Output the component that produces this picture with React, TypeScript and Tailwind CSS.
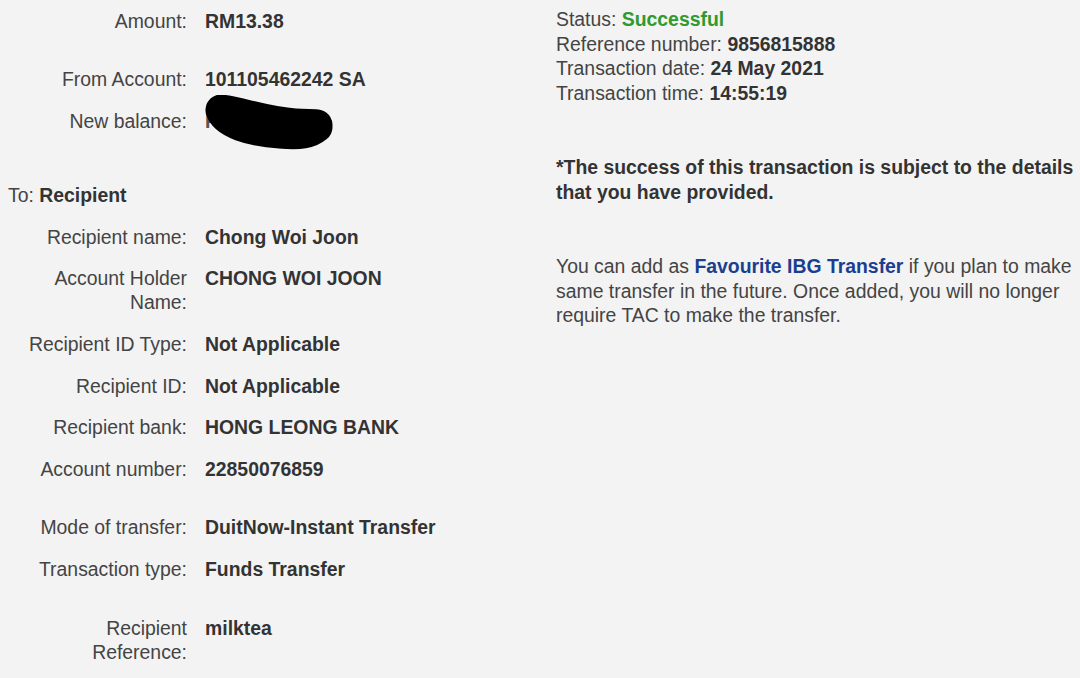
import React from "react";

interface Row {
  label: React.ReactNode;
  value: React.ReactNode;
  gapBefore?: number;
}

const rowsTop: Row[] = [
  { label: "Amount:", value: "RM13.38" },
  { label: "From Account:", value: "101105462242 SA", gapBefore: 17 },
  {
    label: "New balance:",
    value: (
      <span className="relative inline-block">
        <span className="text-[#555]">R</span>
        <Redaction />
      </span>
    ),
  },
];

const rowsRecipient: Row[] = [
  { label: "Recipient name:", value: "Chong Woi Joon" },
  {
    label: (
      <>
        Account Holder
        <br />
        Name:
      </>
    ),
    value: "CHONG WOI JOON",
  },
  { label: "Recipient ID Type:", value: "Not Applicable" },
  { label: "Recipient ID:", value: "Not Applicable" },
  { label: "Recipient bank:", value: "HONG LEONG BANK" },
  { label: "Account number:", value: "22850076859" },
  { label: "Mode of transfer:", value: "DuitNow-Instant Transfer", gapBefore: 17 },
  { label: "Transaction type:", value: "Funds Transfer" },
  {
    label: (
      <>
        Recipient
        <br />
        Reference:
      </>
    ),
    value: "milktea",
    gapBefore: 17,
  },
];

function Redaction() {
  // marker scribble hiding the balance
  return (
    <svg
      className="absolute left-0 top-[-14px]"
      width="140"
      height="60"
      viewBox="0 0 140 60"
    >
      <path
        d="M16 15 C 35 17, 60 27, 90 29 C 102 30, 108 29, 112 30 M16 15 C 20 28, 45 36, 75 38 C 95 40, 105 38, 112 32"
        fill="none"
        stroke="#000"
        strokeWidth="31"
        strokeLinecap="round"
        strokeLinejoin="round"
      />
    </svg>
  );
}

function DetailRow({ row }: { row: Row }) {
  return (
    <div
      className="flex pt-[8.5px] pb-[9.1px]"
      style={row.gapBefore ? { marginTop: row.gapBefore } : undefined}
    >
      <div className="w-[187px] shrink-0 text-right text-[#444]">{row.label}</div>
      <div className="ml-[18px] font-bold text-[#333]">{row.value}</div>
    </div>
  );
}

export default function App() {
  return (
    <div
      className="flex h-[678px] w-[1080px] overflow-hidden bg-[#f3f3f3] text-[19.4px] leading-[24px]"
      style={{ fontFamily: '"Liberation Sans", Arial, sans-serif' }}
    >
      <div className="w-[556px] shrink-0">
        {rowsTop.map((r, i) => (
          <DetailRow key={i} row={r} />
        ))}
        <div className="mt-[33px] pl-[8px] pt-[8.5px] pb-[9.1px] text-[#444]">
          To: <span className="font-bold text-[#333]">Recipient</span>
        </div>
        {rowsRecipient.map((r, i) => (
          <DetailRow key={i} row={r} />
        ))}
      </div>

      <div className="w-[524px] shrink-0 pt-[7px] leading-[24.5px] text-[#444]">
        <div>
          Status: <span className="font-bold text-[#2f9a2f]">Successful</span>
        </div>
        <div>
          Reference number: <span className="font-bold text-[#333]">9856815888</span>
        </div>
        <div>
          Transaction date: <span className="font-bold text-[#333]">24 May 2021</span>
        </div>
        <div>
          Transaction time: <span className="font-bold text-[#333]">14:55:19</span>
        </div>

        <p className="mt-[50px] font-bold text-[#333]">
          *The success of this transaction is subject to the details that you have provided.
        </p>

        <p className="mt-[50px]">
          You can add as{" "}
          <span className="font-bold text-[#1b3f8f]">Favourite IBG Transfer</span> if you
          plan to make same transfer in the future. Once added, you will no longer require
          TAC to make the transfer.
        </p>
      </div>
    </div>
  );
}
